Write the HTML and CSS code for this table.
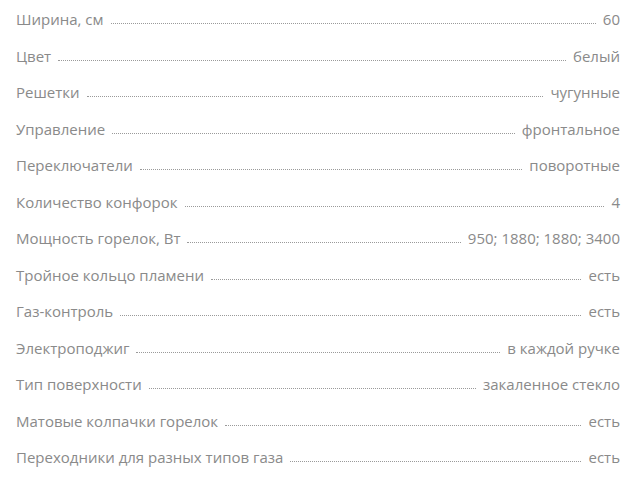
FILE: index.html
```html
<!DOCTYPE html>
<html lang="ru">
<head>
<meta charset="utf-8">
<link rel="stylesheet" href="styles.css">
</head>
<body>
<ul class="specs">
  <li class="row"><span class="label">Ширина, см</span><span class="dots"></span><span class="value">60</span></li>
  <li class="row"><span class="label">Цвет</span><span class="dots"></span><span class="value">белый</span></li>
  <li class="row"><span class="label">Решетки</span><span class="dots"></span><span class="value">чугунные</span></li>
  <li class="row"><span class="label">Управление</span><span class="dots"></span><span class="value">фронтальное</span></li>
  <li class="row"><span class="label">Переключатели</span><span class="dots"></span><span class="value">поворотные</span></li>
  <li class="row"><span class="label">Количество конфорок</span><span class="dots"></span><span class="value">4</span></li>
  <li class="row"><span class="label">Мощность горелок, Вт</span><span class="dots"></span><span class="value">950; 1880; 1880; 3400</span></li>
  <li class="row"><span class="label">Тройное кольцо пламени</span><span class="dots"></span><span class="value">есть</span></li>
  <li class="row"><span class="label">Газ-контроль</span><span class="dots"></span><span class="value">есть</span></li>
  <li class="row"><span class="label">Электроподжиг</span><span class="dots"></span><span class="value">в каждой ручке</span></li>
  <li class="row"><span class="label">Тип поверхности</span><span class="dots"></span><span class="value">закаленное стекло</span></li>
  <li class="row"><span class="label">Матовые колпачки горелок</span><span class="dots"></span><span class="value">есть</span></li>
  <li class="row"><span class="label">Переходники для разных типов газа</span><span class="dots"></span><span class="value">есть</span></li>
</ul>
</body>
</html>
```
FILE: styles.css
```css
html, body {
  margin: 0;
  padding: 0;
  background: #ffffff;
}
body {
  font-family: "Open Sans", "Noto Sans", sans-serif;
  font-size: 15px;
  color: #8a8a8a;
}
.specs {
  list-style: none;
  margin: 0;
  padding: 1px 23px 0 16px;
}
.row {
  display: flex;
  align-items: baseline;
  height: 36.5px;
  line-height: 36.5px;
}
.label, .value {
  white-space: nowrap;
}
.dots {
  flex: 1;
  margin: 0 7px;
  border-bottom: 1px dotted #9a9a9a;
  height: 1px;
  transform: translateY(-1px);
}
```
